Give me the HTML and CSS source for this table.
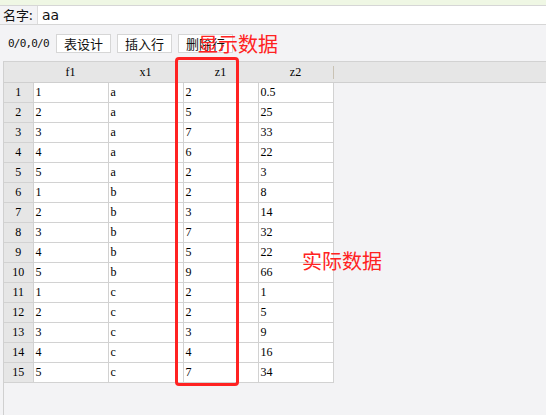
FILE: index.html
```html
<!DOCTYPE html>
<html>
<head>
<meta charset="utf-8">
<link rel="stylesheet" href="styles.css">
</head>
<body>
<div class="topbar"></div>
<div class="name-row">
  <span class="name-label">名字:</span>
  <div class="name-input">aa</div>
</div>
<div class="toolbar">
  <span class="pos">0/0,0/0</span>
  <button class="btn">表设计</button>
  <button class="btn">插入行</button>
  <button class="btn">删除行</button>
</div>
<div class="grid">
  <table class="tbl">
    <colgroup><col class="c-rh"><col class="c-d"><col class="c-d"><col class="c-d"><col class="c-d"></colgroup>
    <thead>
      <tr><th class="corner"></th><th>f1</th><th>x1</th><th>z1</th><th>z2</th></tr>
    </thead>
    <tbody>
      <tr><td class="rh">1</td><td>1</td><td>a</td><td>2</td><td>0.5</td></tr>
      <tr><td class="rh">2</td><td>2</td><td>a</td><td>5</td><td>25</td></tr>
      <tr><td class="rh">3</td><td>3</td><td>a</td><td>7</td><td>33</td></tr>
      <tr><td class="rh">4</td><td>4</td><td>a</td><td>6</td><td>22</td></tr>
      <tr><td class="rh">5</td><td>5</td><td>a</td><td>2</td><td>3</td></tr>
      <tr><td class="rh">6</td><td>1</td><td>b</td><td>2</td><td>8</td></tr>
      <tr><td class="rh">7</td><td>2</td><td>b</td><td>3</td><td>14</td></tr>
      <tr><td class="rh">8</td><td>3</td><td>b</td><td>7</td><td>32</td></tr>
      <tr><td class="rh">9</td><td>4</td><td>b</td><td>5</td><td>22</td></tr>
      <tr><td class="rh">10</td><td>5</td><td>b</td><td>9</td><td>66</td></tr>
      <tr><td class="rh">11</td><td>1</td><td>c</td><td>2</td><td>1</td></tr>
      <tr><td class="rh">12</td><td>2</td><td>c</td><td>2</td><td>5</td></tr>
      <tr><td class="rh">13</td><td>3</td><td>c</td><td>3</td><td>9</td></tr>
      <tr><td class="rh">14</td><td>4</td><td>c</td><td>4</td><td>16</td></tr>
      <tr><td class="rh">15</td><td>5</td><td>c</td><td>7</td><td>34</td></tr>
    </tbody>
  </table>
</div>
<div class="mark-box"></div>
<div class="note note-show">显示数据</div>
<div class="note note-real">实际数据</div>
</body>
</html>
```

FILE: styles.css
```css
html, body {
  margin: 0;
  padding: 0;
  width: 546px;
  height: 415px;
  overflow: hidden;
  background: #f3f3f5;
  font-family: "Noto Sans CJK SC", "Noto Sans", sans-serif;
  position: relative;
}
.topbar {
  height: 5px;
  background: #eff7e4;
  border-bottom: 1px solid #d6d6d6;
}
.name-row {
  height: 18px;
  display: flex;
  align-items: stretch;
  background: #ffffff;
  border-bottom: 1px solid #d6d6d6;
}
.name-label {
  width: 34px;
  padding-left: 3px;
  font-size: 13px;
  line-height: 18px;
  color: #111;
  background: #f3f3f5;
}
.name-input {
  flex: 1;
  border-left: 1px solid #dcdcdc;
  padding-left: 4px;
  font-size: 14px;
  line-height: 18px;
  color: #111;
  font-family: "DejaVu Sans", sans-serif;
}
.toolbar {
  height: 36px;
  display: flex;
  align-items: center;
  padding-left: 8px;
  gap: 5px;
}
.pos {
  font-family: "DejaVu Sans Mono", monospace;
  font-size: 11px;
  color: #111;
  width: 42px;
  letter-spacing: -0.8px;
}
.btn {
  width: 55px;
  height: 19px;
  margin: 0 0 0 1px;
  padding: 0;
  background: #ffffff;
  border: 1px solid #d6d6d6;
  border-radius: 0;
  font-family: "Noto Sans CJK SC", sans-serif;
  font-size: 13px;
  line-height: 17px;
  color: #111;
}
.grid {
  margin-left: 3px;
  height: 353px;
  border-left: 1px solid #d0d0d0;
  border-top: 1px solid #d2d2d2;
  background: linear-gradient(#e6e6e6 0 20px, #cfcfcf 20px 21px, #f3f3f5 21px);
}
.tbl {
  border-collapse: collapse;
  table-layout: fixed;
  width: 329px;
  font-family: "Liberation Serif", serif;
  font-size: 12px;
  color: #000;
}
.c-rh { width: 29px; }
.c-d { width: 75px; }
.tbl th {
  height: 20px;
  padding: 0;
  font-weight: normal;
  text-align: center;
  background: #e6e6e6;
  border-bottom: 1px solid #cfcfcf;
  position: relative;
}
.tbl th::after {
  content: "";
  position: absolute;
  right: -1px;
  top: 4px;
  height: 13px;
  border-right: 1px solid #c9c2b4;
}
.tbl td {
  height: 19px;
  padding: 0 0 0 2px;
  border: 1px solid #d2d2d2;
  background: #ffffff;
  text-align: left;
  line-height: 19px;
}
.tbl td.rh {
  background: #e6e6e6;
  text-align: center;
  padding: 0;
  border-left: none;
}
.mark-box {
  position: absolute;
  left: 175px;
  top: 57px;
  width: 58px;
  height: 323px;
  border: 3px solid #ff2222;
  border-radius: 4px;
}
.note {
  position: absolute;
  color: #ff2222;
  font-family: "Noto Sans CJK SC", sans-serif;
  font-size: 20px;
  line-height: 22px;
}
.note-show {
  left: 198px;
  top: 33px;
}
.note-real {
  left: 302px;
  top: 250px;
}
```
